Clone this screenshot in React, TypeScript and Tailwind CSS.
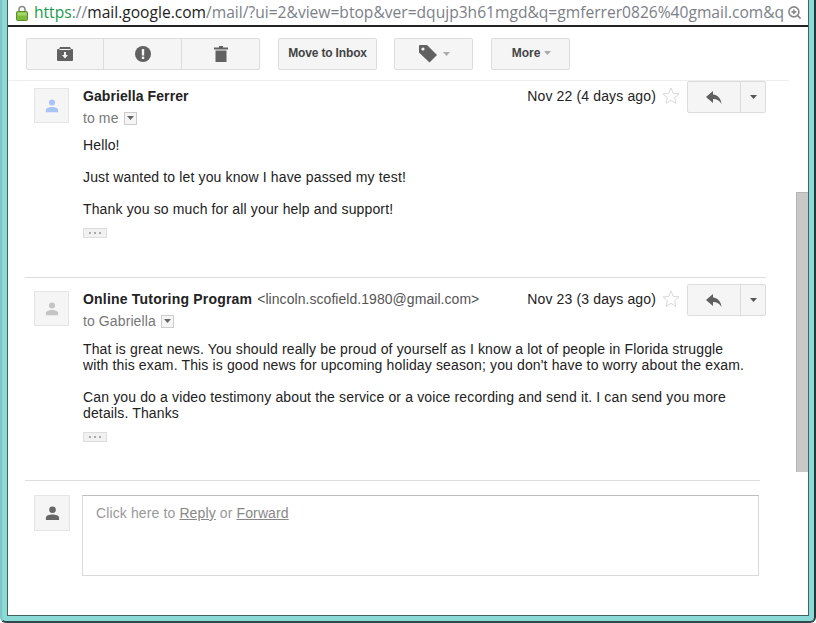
import React from 'react';
import { ZoomIn } from 'lucide-react';

const Lock = () => (
  <svg width="12" height="16" viewBox="0 0 12 16" className="shrink-0">
    <path d="M3 7V4.500a3 3 0 0 1 6 0V7" fill="none" stroke="#8a8a8a" strokeWidth="1.500" />
    <rect x="0.500" y="6.500" width="11" height="9" rx="1" fill="#7dbb3c" stroke="#5b8f2a" />
    <rect x="1.500" y="7.500" width="9" height="3" fill="#a5d86a" />
  </svg>
);

const ArchiveIcon = () => (
  <svg width="16" height="14" viewBox="0 0 16 14">
    <path d="M3 0h10l1 2h1a1 1 0 0 1 1 1v10a1 1 0 0 1-1 1H1a1 1 0 0 1-1-1V3a1 1 0 0 1 1-1h1z" fill="#616161" />
    <path d="M2.500 2.500h11" stroke="#f5f5f5" strokeWidth="1" />
    <path d="M7 5h2v3h2l-3 3.500L5 8h2z" fill="#f5f5f5" />
  </svg>
);

const SpamIcon = () => (
  <svg width="16" height="16" viewBox="0 0 16 16">
    <circle cx="8" cy="8" r="8" fill="#616161" />
    <rect x="6.800" y="3" width="2.400" height="6.500" fill="#f5f5f5" />
    <rect x="6.800" y="10.600" width="2.400" height="2.400" fill="#f5f5f5" />
  </svg>
);

const TrashIcon = () => (
  <svg width="14" height="16" viewBox="0 0 14 16">
    <path d="M5 0h4v1.500h5v2H0v-2h5z" fill="#616161" />
    <path d="M1.500 4.500h11V16h-11z" fill="#616161" />
  </svg>
);

const TagIcon = () => (
  <svg width="18" height="18" viewBox="0 0 18 18">
    <path d="M1 0h7l10 10-7.500 7.500L0 7.500V1a1 1 0 0 1 1-1z" fill="#616161" />
    <circle cx="4" cy="4" r="1.600" fill="#f5f5f5" />
  </svg>
);

const ReplyIcon = () => (
  <svg width="16" height="13" viewBox="0 0 16 13">
    <path d="M7 0v3.500C12 4 15 7.500 15.500 13 13.500 9.500 11 8 7 8v4L0 6z" fill="#5f5f5f" />
  </svg>
);

const Star = () => (
  <svg width="18" height="17" viewBox="0 0 18 17" className="shrink-0">
    <path d="M9 1l2.300 5.400 5.700.5-4.300 3.800 1.300 5.700L9 13.400l-5 3 1.300-5.700L1 6.900l5.700-.5z" fill="#fff" stroke="#d8d8d8" />
  </svg>
);

const Caret = ({ color = '#777' }: { color?: string }) => (
  <svg width="7" height="4" viewBox="0 0 7 4" className="shrink-0">
    <path d="M0 0h7L3.500 4z" fill={color} />
  </svg>
);

const Person = ({ color, size = 16 }: { color: string; size?: number }) => (
  <svg width={size} height={size} viewBox="0 0 16 16">
    <circle cx="8" cy="4" r="3.500" fill={color} />
    <path d="M1 15v-2.500C1 10 4.500 9 8 9s7 1 7 3.500V15z" fill={color} />
  </svg>
);

const Dots = () => (
  <div className="mt-[11px] flex h-[10px] w-[24px] items-center justify-center gap-[3px] border border-[#ddd] bg-[#f1f1f1]">
    <span className="h-[2px] w-[2px] bg-[#aaa]" />
    <span className="h-[2px] w-[2px] bg-[#aaa]" />
    <span className="h-[2px] w-[2px] bg-[#aaa]" />
  </div>
);

const ToolBtn = ({ className, children }: { className: string; children: React.ReactNode }) => (
  <div className={`flex h-[32px] items-center justify-center rounded-[2px] border border-[#dcdcdc] bg-[#f5f5f5] ${className}`}>
    {children}
  </div>
);

type MessageProps = {
  name: string;
  nameClass: string;
  email?: string;
  to: string;
  date: string;
  avatar: string;
  bodyClass: string;
  paragraphs: string[][];
};

const Message = ({ name, nameClass, email, to, date, avatar, bodyClass, paragraphs }: MessageProps) => (
  <div className="flex">
    <div className="ml-[9px] mt-[7px] flex h-[35px] w-[35px] shrink-0 items-center justify-center border border-[#e5e5e5] bg-[#f5f5f5]">
      <Person color={avatar} size={14} />
    </div>
    <div className="ml-[14px] min-w-0 flex-1">
      <div className="flex items-start">
        <div className="flex-1 pt-[7px]">
          <div className="flex h-[16px] items-center leading-[16px]">
            <span className={`text-[14px] font-bold text-[#222] ${nameClass}`}>{name}</span>
            {email && <span className="ml-[5px] text-[14px] tracking-[0.05px] text-[#555]">{email}</span>}
          </div>
          <div className="mt-[6px] flex h-[16px] items-center gap-[5px] text-[14px] leading-[16px] tracking-[0.1px] text-[#777]">
            {to}
            <span className="flex h-[13px] w-[13px] items-center justify-center border border-[#ccc] bg-[#f5f5f5]">
              <Caret color="#666" />
            </span>
          </div>
        </div>
        <span className="mt-[7px] text-[14px] leading-[16px] tracking-[0.14px] text-[#222]">{date}</span>
        <span className="ml-[6px] mr-[7px] mt-[6px]">
          <Star />
        </span>
        <div className="flex h-[32px] w-[79px] rounded-[2px] border border-[#dcdcdc] bg-[#f5f5f5]">
          <div className="flex w-[53px] items-center justify-center border-r border-[#dcdcdc]">
            <ReplyIcon />
          </div>
          <div className="flex flex-1 items-center justify-center">
            <Caret color="#555" />
          </div>
        </div>
      </div>
      <div className={`flex flex-col gap-[16px] text-[14px] leading-[16px] tracking-[0.14px] text-[#222] ${bodyClass}`}>
        {paragraphs.map((lines, i) => (
          <div key={i}>
            {lines.map((line) => (
              <div key={line} className="whitespace-nowrap">{line}</div>
            ))}
          </div>
        ))}
      </div>
      <Dots />
    </div>
  </div>
);

export default function App() {
  return (
    <div className="h-[623px] w-[816px] overflow-hidden rounded-b-[6px] border-x-2 border-b-2 border-b-[#2f4a4a] border-l-[#7fc4c2] border-r-[#22393a] bg-[#8adbd8] px-[5px] pb-[5px] font-['Liberation_Sans',Arial,sans-serif]">
      <div className="flex h-full flex-col border-x border-b border-[#44605f] bg-white">
        {/* address bar */}
        <div className="flex h-[27px] shrink-0 items-center border-b-2 border-[#222] bg-white pl-[8px] pr-[6px] font-['Open_Sans',sans-serif] text-[15.6px]">
          <Lock />
          <div className="ml-[6px] flex-1 whitespace-nowrap text-[#7b8087]">
            <span className="text-[#1a9a4a]">https</span>://<span className="text-[#222]">mail.google.com</span>/mail/?ui=2&amp;view=btop&amp;ver=dqujp3h61mgd&amp;q=gmferrer0826%40gmail.com&amp;q
          </div>
          <ZoomIn className="h-[15px] w-[15px] text-[#888]" strokeWidth={2.5} />
        </div>

        {/* toolbar */}
        <div className="mr-[19px] flex h-[54px] shrink-0 items-start gap-[18px] border-b border-[#eee] pl-[18px] pt-[11px]">
          <div className="flex h-[32px] w-[234px] rounded-[2px] border border-[#dcdcdc] bg-[#f5f5f5]">
            <div className="flex w-[77px] items-center justify-center border-r border-[#dcdcdc]"><ArchiveIcon /></div>
            <div className="flex w-[78px] items-center justify-center border-r border-[#dcdcdc]"><SpamIcon /></div>
            <div className="flex flex-1 items-center justify-center"><TrashIcon /></div>
          </div>
          <ToolBtn className="w-[99px] pb-[2px] text-[12px] font-bold tracking-[-0.15px] text-[#444]">Move to Inbox</ToolBtn>
          <ToolBtn className="-ml-px w-[79px] gap-[6px] pl-[2px]"><TagIcon /><Caret color="#aaa" /></ToolBtn>
          <ToolBtn className="w-[79px] gap-[4px] pb-[2px] pl-[2px] text-[12px] font-bold text-[#444]">More<Caret color="#aaa" /></ToolBtn>
        </div>

        <div className="flex min-h-0 flex-1">
          <div className="min-w-0 flex-1 pl-[17px]">
            <div className="w-[741px]">
              <Message
                name="Gabriella Ferrer"
                nameClass="tracking-[0.08px]"
                to="to me"
                date="Nov 22 (4 days ago)"
                avatar="#a9c4f4"
                bodyClass="mt-[11px]"
                paragraphs={[
                  ['Hello!'],
                  ['Just wanted to let you know I have passed my test!'],
                  ['Thank you so much for all your help and support!'],
                ]}
              />
              <div className="mt-[39px] border-t border-[#ddd] pt-[6px]">
                <Message
                  name="Online Tutoring Program"
                  nameClass="tracking-[0.2px]"
                  email="<lincoln.scofield.1980@gmail.com>"
                  to="to Gabriella"
                  date="Nov 23 (3 days ago)"
                  avatar="#c4c4c4"
                  bodyClass="mt-[12px]"
                  paragraphs={[
                    [
                      'That is great news. You should really be proud of yourself as I know a lot of people in Florida struggle',
                      "with this exam. This is good news for upcoming holiday season; you don't have to worry about the exam.",
                    ],
                    [
                      'Can you do a video testimony about the service or a voice recording and send it. I can send you more',
                      'details. Thanks',
                    ],
                  ]}
                />
              </div>
            </div>
            <div className="mt-[38px] w-[735px] border-t border-[#ddd] pt-[14px]">
              <div className="flex">
                <div className="ml-[9px] flex h-[36px] w-[36px] shrink-0 items-center justify-center border border-[#e5e5e5] bg-[#f5f5f5]">
                  <Person color="#666" size={15} />
                </div>
                <div className="ml-[12px] h-[81px] w-[677px] border border-[#d9d9d9] border-t-[#bdbdbd] px-[13px] py-[9px] text-[14px] leading-[16px] tracking-[0.12px] text-[#999]">
                  Click here to <span className="text-[#888] underline">Reply</span> or <span className="text-[#888] underline">Forward</span>
                </div>
              </div>
            </div>
          </div>

          {/* scrollbar */}
          <div className="w-[12px] shrink-0 pt-[111px]">
            <div className="h-[280px] border-l border-t border-[#b4b4b4] bg-[#c8c8c8]" />
          </div>
        </div>
      </div>
    </div>
  );
}
